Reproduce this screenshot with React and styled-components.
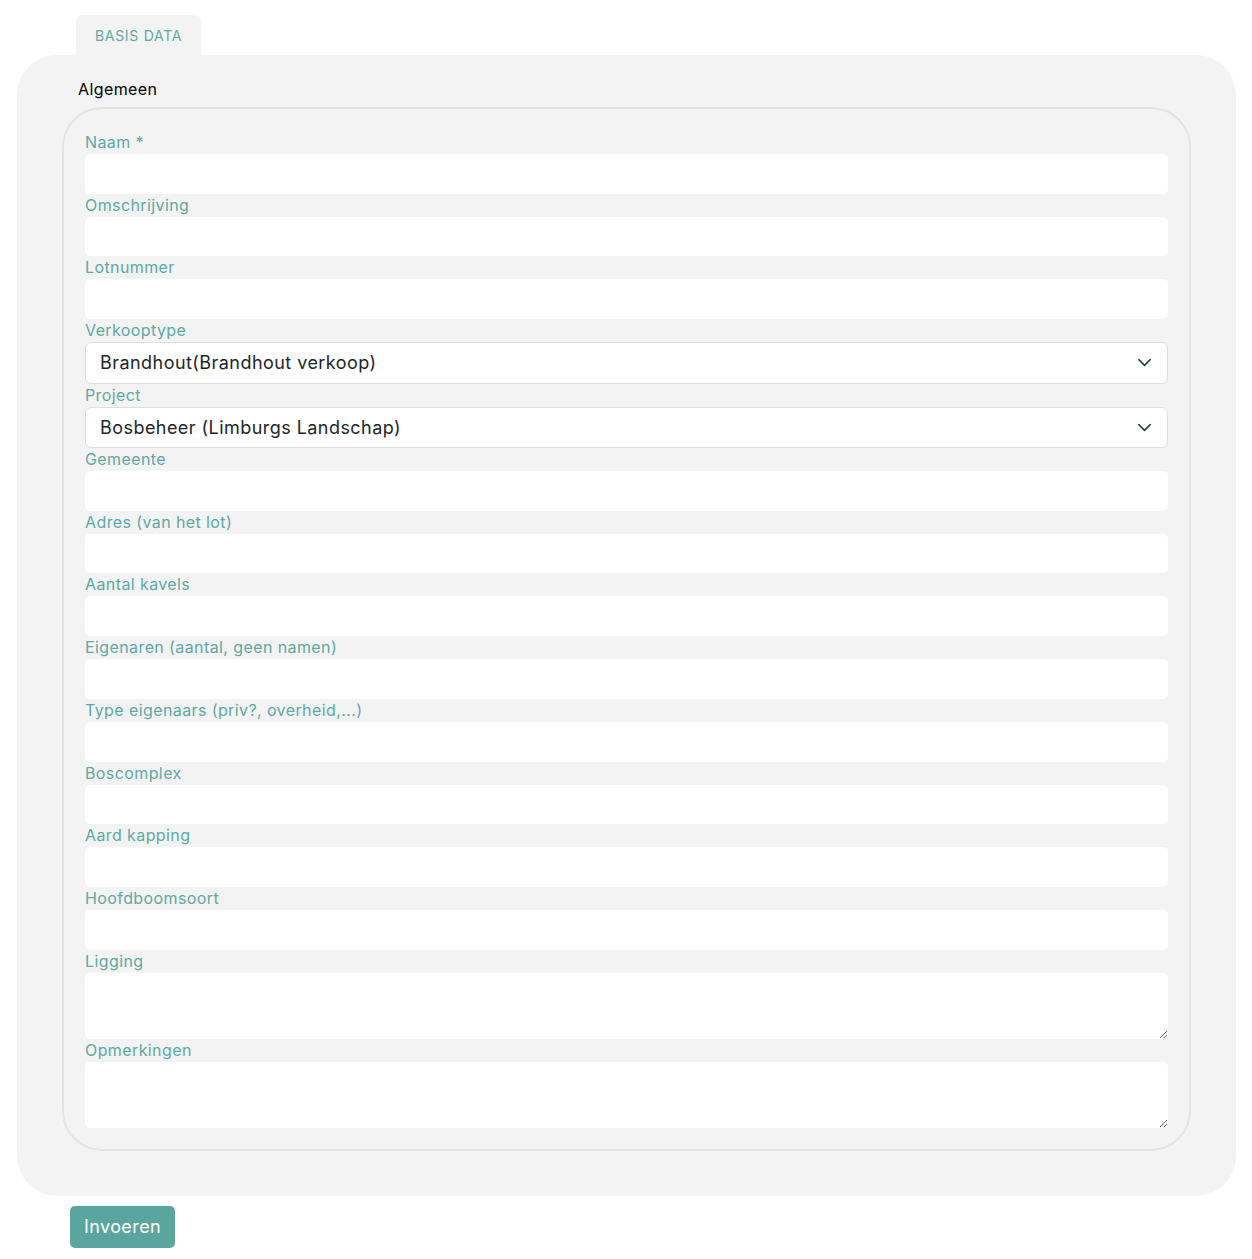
import React from 'react';
import styled, { createGlobalStyle } from 'styled-components';

const GlobalStyle = createGlobalStyle`
  body {
    margin: 0;
    background: #ffffff;
    font-family: Inter, "Noto Sans", sans-serif;
  }
  * {
    box-sizing: border-box;
  }
`;

const Page = styled.div`
  padding: 15px 16px 12px 17px;
`;

const Tabs = styled.div`
  display: flex;
  padding-left: 59px;
`;

const Tab = styled.div`
  width: 125px;
  height: 40px;
  display: flex;
  align-items: center;
  justify-content: center;
  background: #f3f3f3;
  border-radius: 6px 6px 0 0;
  color: #5ea9a3;
  font-size: 14px;
  letter-spacing: 0.7px;
  text-transform: uppercase;
`;

const Panel = styled.div`
  background: #f3f3f3;
  border-radius: 40px;
  padding: 24px 45px 45px 45px;
`;

const SectionTitle = styled.div`
  color: #000;
  font-size: 16px;
  letter-spacing: 0.4px;
  padding-left: 16px;
  height: 28px;
`;

const Fieldset = styled.fieldset`
  margin: 0;
  border: 2px solid #e3e3e3;
  border-radius: 40px;
  padding: 22px 21px 21px 21px;
  display: flex;
  flex-direction: column;
`;

const Label = styled.label`
  display: block;
  color: #5ea9a3;
  font-size: 16px;
  letter-spacing: 0.4px;
  line-height: 23px;
`;

const Input = styled.input`
  display: block;
  width: 100%;
  height: 39.7px;
  border: none;
  border-radius: 5px;
  background: #fff;
  outline: none;
  font-family: inherit;
`;

const TextArea = styled.textarea`
  display: block;
  width: 100%;
  height: 66px;
  border: none;
  border-radius: 5px;
  background: #fff;
  outline: none;
  resize: vertical;
  font-family: inherit;
`;

const SelectBox = styled.div`
  display: flex;
  align-items: center;
  justify-content: space-between;
  height: 41.5px;
  padding: 0 15px 0 14px;
  background: #fff;
  border: 1px solid #dedede;
  border-radius: 6px;
  color: #212529;
  font-size: 18px;
  letter-spacing: 0.45px;
`;

const Button = styled.button`
  margin: 10px 0 0 53px;
  height: 42px;
  padding: 0 14px;
  background: #5aa59d;
  color: #fff;
  border: none;
  border-radius: 5px;
  font-family: inherit;
  font-size: 18px;
  letter-spacing: 0.4px;
`;

const Chevron = () => (
  <svg width="15" height="15" viewBox="0 0 16 16">
    <path d="M2 5l6 6 6-6" fill="none" stroke="#343a40" strokeWidth="1.7" strokeLinecap="round" strokeLinejoin="round" />
  </svg>
);

const fields = [
  { label: 'Naam *' },
  { label: 'Omschrijving' },
  { label: 'Lotnummer' },
  { label: 'Verkooptype', select: 'Brandhout(Brandhout verkoop)' },
  { label: 'Project', select: 'Bosbeheer (Limburgs Landschap)' },
  { label: 'Gemeente' },
  { label: 'Adres (van het lot)' },
  { label: 'Aantal kavels' },
  { label: 'Eigenaren (aantal, geen namen)' },
  { label: 'Type eigenaars (priv?, overheid,...)' },
  { label: 'Boscomplex' },
  { label: 'Aard kapping' },
  { label: 'Hoofdboomsoort' },
  { label: 'Ligging', area: true },
  { label: 'Opmerkingen', area: true },
];

const App = () => (
  <>
    <GlobalStyle />
    <Page>
      <Tabs>
        <Tab>Basis data</Tab>
      </Tabs>
      <Panel>
        <SectionTitle>Algemeen</SectionTitle>
        <Fieldset>
          {fields.map((f) => (
            <div key={f.label}>
              <Label>{f.label}</Label>
              {f.select ? (
                <SelectBox>
                  <span>{f.select}</span>
                  <Chevron />
                </SelectBox>
              ) : f.area ? (
                <TextArea />
              ) : (
                <Input />
              )}
            </div>
          ))}
        </Fieldset>
      </Panel>
      <Button>Invoeren</Button>
    </Page>
  </>
);

export default App;
